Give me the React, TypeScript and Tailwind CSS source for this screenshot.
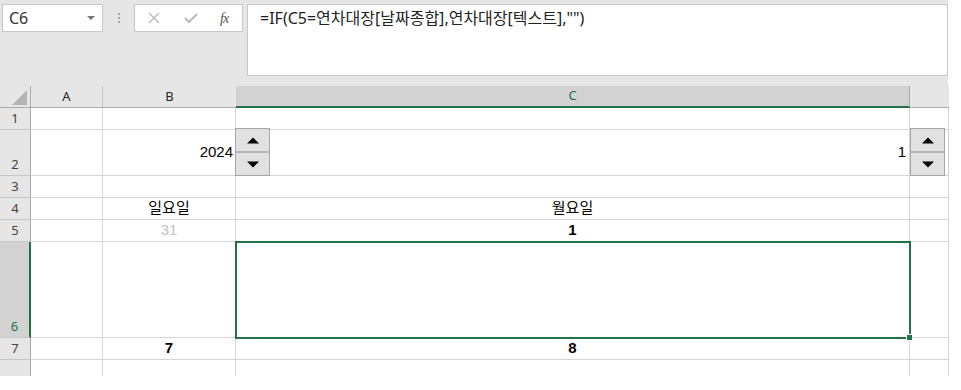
import React from "react"

const GRID = "border-r border-b border-[#d4d4d4]"
const ROWHEAD = "w-[31px] shrink-0 bg-[#e6e6e6] border-r border-b border-r-[#ababab] border-b-[#c8c8c8] flex items-end justify-center pb-[1px] text-[13px] text-[#444]"
const CELLFONT = "font-['Liberation_Sans','Noto_Sans_CJK_KR',sans-serif] text-[15px] text-black"

function Spinner() {
  return (
    <div className="w-[35px] h-[48px] flex flex-col border border-[#a6a6a6] bg-[#e1e1e1]">
      <div className="flex-1 flex items-center justify-center border-b-2 border-[#b5b5b5]">
        <svg width="12" height="7" viewBox="0 0 12 7"><path d="M0 6.5 L6 0.5 L12 6.5 Z" fill="#000" /></svg>
      </div>
      <div className="flex-1 flex items-center justify-center">
        <svg width="12" height="7" viewBox="0 0 12 7"><path d="M0 0.5 L6 6.5 L12 0.5 Z" fill="#000" /></svg>
      </div>
    </div>
  )
}

function Row({ n, h, sel, b, c, last }: { n: string; h: string; sel?: boolean; b?: React.ReactNode; c?: React.ReactNode; last?: boolean }) {
  const border = last ? "border-r border-[#d4d4d4]" : GRID
  return (
    <div className={`flex ${h}`}>
      <div className={sel ? "w-[31px] shrink-0 bg-[#d2d2d2] border-r-2 border-b border-r-[#217346] border-b-[#c8c8c8] flex items-end justify-center pb-[1px] text-[13px] text-[#217346]" : last ? "w-[31px] shrink-0 bg-[#e6e6e6] border-r border-[#ababab]" : ROWHEAD}>
        {last ? "" : n}
      </div>
      <div className={`w-[72px] shrink-0 ${border}`} />
      <div className={`w-[133px] shrink-0 ${border} flex items-center justify-center ${CELLFONT}`}>{b}</div>
      <div className={`w-[674px] shrink-0 ${border} relative flex items-center justify-center ${CELLFONT}`}>
        {c}
        {sel && (
          <div className="absolute -left-px -top-px -right-[2px] -bottom-[2px] border-2 border-[#217346] z-10">
            <div className="absolute -right-[4px] -bottom-[4px] w-[7px] h-[7px] bg-[#217346] border border-white" />
          </div>
        )}
      </div>
      <div className={`w-[39px] shrink-0 ${border}`} />
    </div>
  )
}

export default function App() {
  return (
    <div className="w-[961px] h-[390px] bg-white overflow-hidden font-['Noto_Sans','Noto_Sans_CJK_KR',sans-serif]">
      {/* formula bar */}
      <div className="w-[948px] h-[86px] bg-[#e6e6e6] flex items-start pt-[4px] pl-[2px]">
        <div className="w-[101px] h-[28px] bg-white border border-[#c6c6c6] flex items-center justify-between pl-[6px] pr-[7px]">
          <span className="text-[16px] text-[#333]">C6</span>
          <svg width="8" height="4" viewBox="0 0 8 4"><path d="M0 0 L8 0 L4 4 Z" fill="#777" /></svg>
        </div>
        <div className="w-[31px] h-[28px] flex flex-col items-center justify-center gap-[2px]">
          <div className="w-[2px] h-[2px] bg-[#a6a6a6]" />
          <div className="w-[2px] h-[2px] bg-[#a6a6a6]" />
          <div className="w-[2px] h-[2px] bg-[#a6a6a6]" />
        </div>
        <div className="w-[109px] h-[28px] bg-white border border-[#c6c6c6] flex items-center pl-[13px]">
          <svg width="12" height="12" viewBox="0 0 12 12"><path d="M1 1 L11 11 M11 1 L1 11" stroke="#b9b9b9" strokeWidth="1.4" /></svg>
          <svg className="ml-[24px]" width="14" height="12" viewBox="0 0 14 12"><path d="M1 6 L5 10 L13 2" stroke="#b9b9b9" strokeWidth="2" fill="none" /></svg>
          <span className="ml-[22px] text-[14px] italic text-[#555] font-['Liberation_Serif',serif] tracking-[-1px]">fx</span>
        </div>
        <div className="ml-[4px] w-[701px] h-[72px] bg-white border border-[#c6c6c6] pl-[12px] leading-[26px]">
          <span className="text-[16px] text-[#222]">=IF(C5=연차대장[날짜종합],연차대장[텍스트],"")</span>
        </div>
      </div>

      {/* column headers */}
      <div className="flex h-[22px] text-[13px] text-[#262626]">
        <div className="w-[31px] shrink-0 bg-[#e6e6e6] border-r border-b border-[#ababab] flex items-end justify-end pr-[3px] pb-[2px]">
          <svg width="15" height="15" viewBox="0 0 15 15"><path d="M15 0 L15 15 L0 15 Z" fill="#b4b4b4" /></svg>
        </div>
        <div className="w-[72px] shrink-0 bg-[#e6e6e6] border-r border-b border-r-[#c6c6c6] border-b-[#ababab] flex items-center justify-center">A</div>
        <div className="w-[133px] shrink-0 bg-[#e6e6e6] border-b border-[#ababab] flex items-center justify-center">B</div>
        <div className="w-[674px] shrink-0 bg-[#d2d2d2] border-b-2 border-[#217346] flex items-center justify-center text-[#217346] border-r border-r-[#ababab]">C</div>
        <div className="w-[39px] shrink-0 bg-[#e6e6e6] border-b border-[#ababab]" />
      </div>

      <Row n="1" h="h-[22px]" />
      <div className="relative">
        <Row n="2" h="h-[46px]" b={<span className="w-full text-right pr-[2px]">2024</span>} c={<span className="w-full text-right pr-[3px]">1</span>} />
        <div className="absolute left-[235px] -top-[2px] z-20"><Spinner /></div>
        <div className="absolute left-[910px] -top-[2px] z-20"><Spinner /></div>
      </div>
      <Row n="3" h="h-[22px]" />
      <Row n="4" h="h-[22px]" b="일요일" c="월요일" />
      <Row n="5" h="h-[22px]" b={<span className="text-[#bfbfbf]">31</span>} c={<span className="font-bold">1</span>} />
      <Row n="6" h="h-[96px]" sel />
      <Row n="7" h="h-[22px]" b={<span className="font-bold">7</span>} c={<span className="font-bold">8</span>} />
      <Row n="" h="h-[16px]" last />
    </div>
  )
}
